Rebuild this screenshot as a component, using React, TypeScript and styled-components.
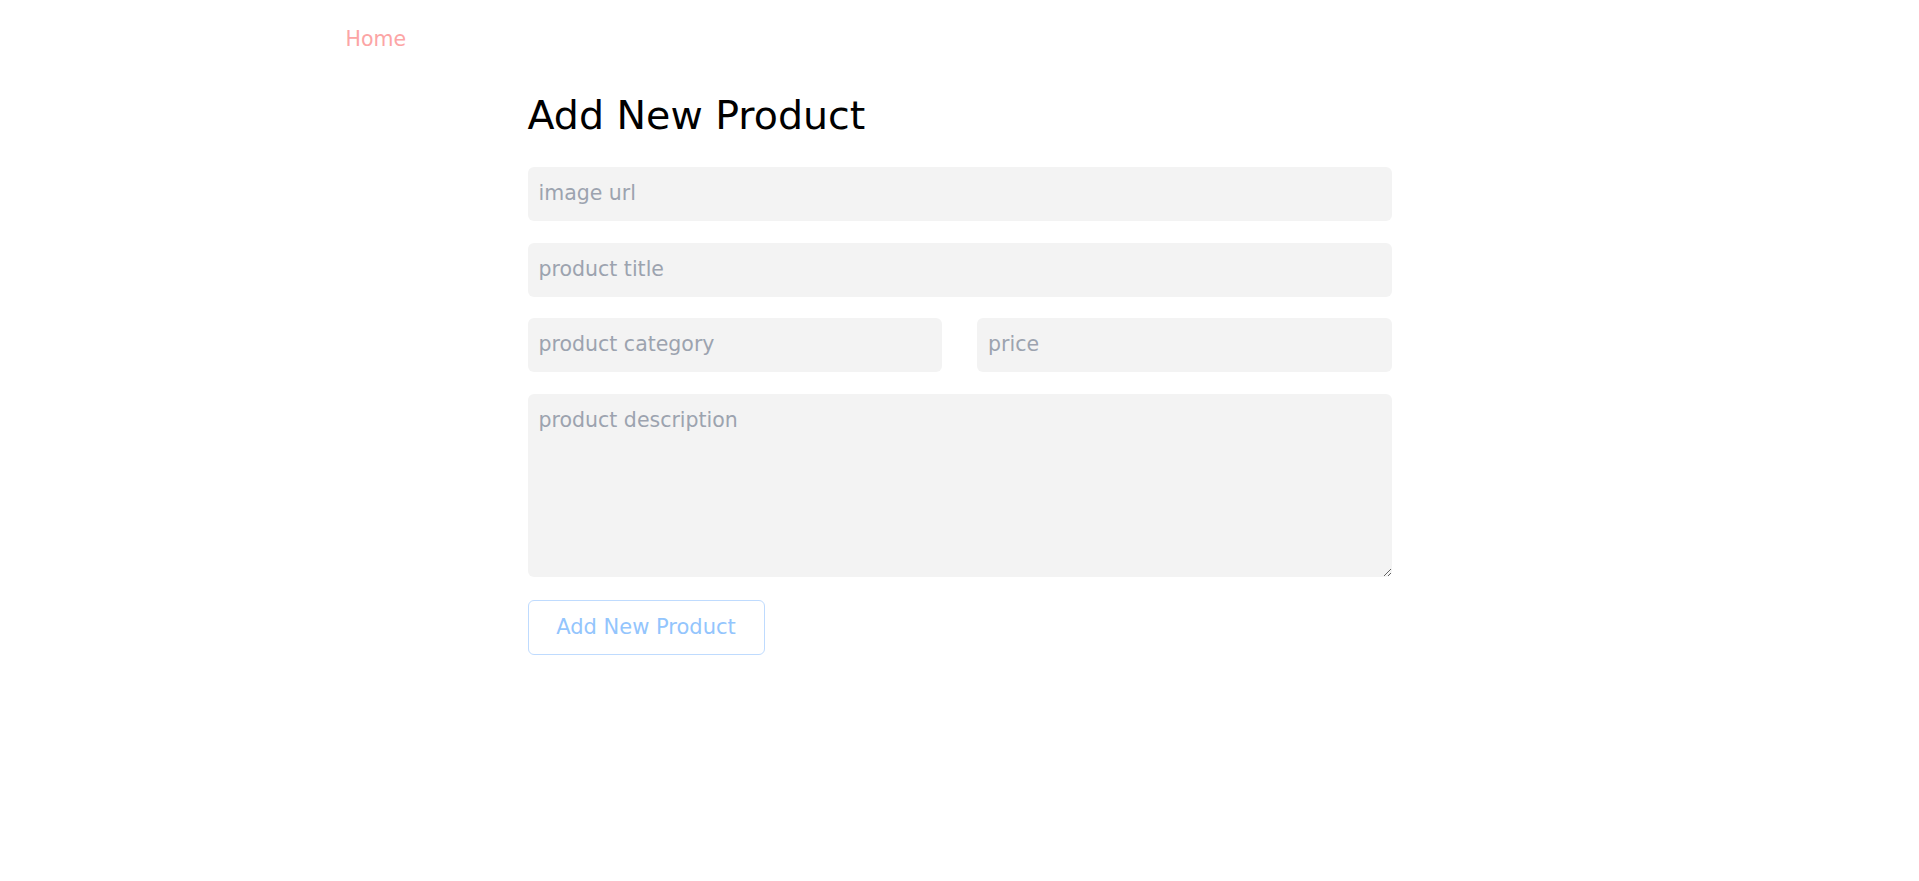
import React from "react";
import styled, { createGlobalStyle, css } from "styled-components";

const GlobalStyle = createGlobalStyle`
  html, body { margin: 0; padding: 0; background: #ffffff; }
  body { font-family: "DejaVu Sans", "Liberation Sans", sans-serif; color: #000; }
  * { box-sizing: border-box; }
`;

const Nav = styled.nav`
  max-width: 1280px;
  margin: 0 auto;
  padding: 25px 0 0 26px;
  display: flex;
`;

const NavLink = styled.a`
  font-size: 20.5px;
  line-height: 28px;
  color: #fca5a5;
  text-decoration: none;
  cursor: pointer;
`;

const Main = styled.main`
  width: 864px;
  margin: 0 auto;
  padding-top: 39px;
`;

const Title = styled.h1`
  margin: 0 0 28px 0;
  font-size: 39.5px;
  line-height: 47px;
  font-weight: 400;
`;

const Form = styled.form`
  display: flex;
  flex-direction: column;
  gap: 21.5px;
`;

const Row = styled.div`
  display: grid;
  grid-template-columns: 1fr 1fr;
  gap: 35px;
`;

const fieldStyles = css`
  width: 100%;
  border: none;
  outline: none;
  background: #f3f3f3;
  border-radius: 6px;
  font-family: "DejaVu Sans", "Liberation Sans", sans-serif;
  font-size: 20.5px;
  line-height: 28px;
  color: #111;
  padding: 12px 11px 14px 11px;
  &::placeholder {
    color: #9ca3af;
    opacity: 1;
    font-size: 20.5px;
  }
`;

const Input = styled.input`
  ${fieldStyles}
  height: 54px;
`;

const TextArea = styled.textarea`
  ${fieldStyles}
  display: block;
  height: 183px;
`;

const Submit = styled.button`
  align-self: flex-start;
  width: 237px;
  height: 55px;
  margin-top: 1.5px;
  background: #fff;
  border: 1px solid #bfdbfe;
  border-radius: 6px;
  font-family: "DejaVu Sans", "Liberation Sans", sans-serif;
  font-size: 21px;
  line-height: 28px;
  color: #93c5fd;
  padding: 0;
  cursor: pointer;
`;

export default function App() {
  return (
    <>
      <GlobalStyle />
      <Nav>
        <NavLink href="#">Home</NavLink>
      </Nav>
      <Main>
        <Title>Add New Product</Title>
        <Form onSubmit={(e) => e.preventDefault()}>
          <Input placeholder="image url" />
          <Input placeholder="product title" />
          <Row>
            <Input placeholder="product category" />
            <Input placeholder="price" />
          </Row>
          <TextArea placeholder="product description" />
          <Submit type="submit">Add New Product</Submit>
        </Form>
      </Main>
    </>
  );
}
